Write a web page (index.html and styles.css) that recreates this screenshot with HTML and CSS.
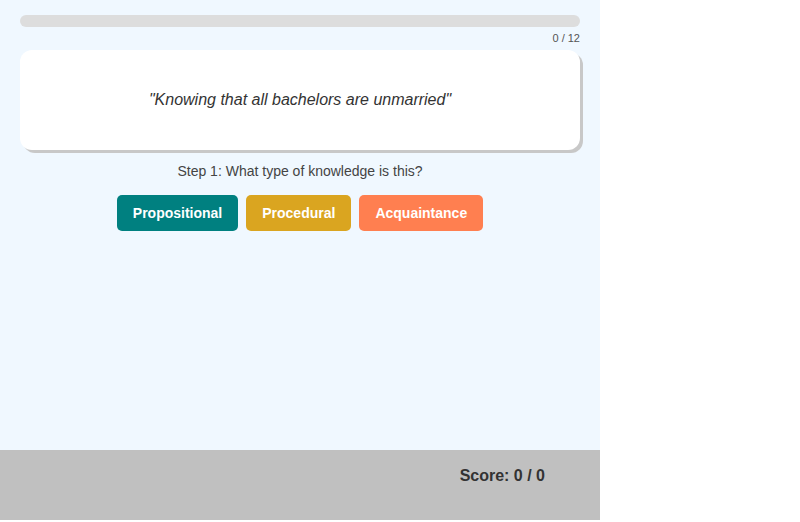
FILE: index.html
```html
<!DOCTYPE html>
<html>
<head>
<meta charset="utf-8">
<link rel="stylesheet" href="styles.css">
</head>
<body>
<div class="app">
  <div class="main">
    <div class="progress"><div class="progress-fill" style="width:0%"></div></div>
    <div class="progress-label">0 / 12</div>
    <div class="card">
      <p class="quote">"Knowing that all bachelors are unmarried"</p>
    </div>
    <div class="step">Step 1: What type of knowledge is this?</div>
    <div class="choices">
      <button class="btn teal">Propositional</button>
      <button class="btn gold">Procedural</button>
      <button class="btn coral">Acquaintance</button>
    </div>
  </div>
  <div class="footer">
    <div class="score">Score: 0 / 0</div>
  </div>
</div>
</body>
</html>
```
FILE: styles.css
```css
html, body {
  margin: 0;
  padding: 0;
  background: #ffffff;
}
body {
  font-family: "Liberation Sans", Arial, sans-serif;
}
.app {
  width: 600px;
  height: 520px;
  display: flex;
  flex-direction: column;
  background: #f0f8ff;
}
.main {
  flex: 1;
  padding: 15px 20px 0 20px;
  display: flex;
  flex-direction: column;
}
.progress {
  height: 12px;
  background: #dddddd;
  border-radius: 6px;
  overflow: hidden;
}
.progress-fill {
  height: 100%;
  background: #008080;
}
.progress-label {
  text-align: right;
  font-size: 11px;
  color: #555555;
  margin-top: 4px;
  line-height: 15px;
}
.card {
  margin-top: 4px;
  height: 100px;
  background: #ffffff;
  border-radius: 12px;
  box-shadow: 3px 3px 0 #c8c8c8;
  display: flex;
  align-items: center;
  justify-content: center;
}
.quote {
  margin: 0;
  font-style: italic;
  font-size: 16px;
  color: #333333;
}
.step {
  margin-top: 13px;
  text-align: center;
  font-size: 14px;
  color: #444444;
  line-height: 16px;
}
.choices {
  margin-top: 16px;
  display: flex;
  justify-content: center;
  gap: 8px;
}
.btn {
  height: 36px;
  padding: 0 16px;
  border: none;
  border-radius: 5px;
  color: #ffffff;
  font-family: "Liberation Sans", Arial, sans-serif;
  font-weight: bold;
  font-size: 14px;
}
.teal { background: #008080; }
.gold { background: #daa520; }
.coral { background: #ff7f50; }
.footer {
  height: 70px;
  background: #c0c0c0;
  display: flex;
  justify-content: flex-end;
  padding-right: 55px;
}
.score {
  margin-top: 17px;
  font-size: 16px;
  font-weight: bold;
  color: #333333;
  line-height: 18px;
}
```
